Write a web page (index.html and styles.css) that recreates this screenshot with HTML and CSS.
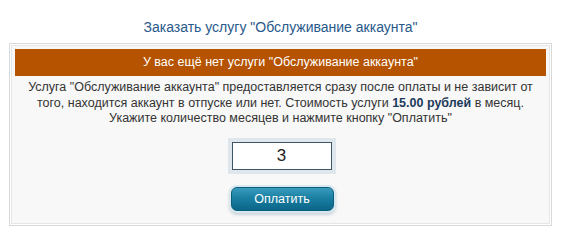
FILE: index.html
```html
<!DOCTYPE html>
<html lang="ru">
<head>
<meta charset="utf-8">
<link rel="stylesheet" href="styles.css">
</head>
<body>
<div class="page">
  <h1 class="title">Заказать услугу "Обслуживание аккаунта"</h1>
  <div class="box">
    <div class="notice">У вас ещё нет услуги "Обслуживание аккаунта"</div>
    <p class="desc">Услуга "Обслуживание аккаунта" предоставляется сразу после оплаты и не зависит от<br>того, находится аккаунт в отпуске или нет. Стоимость услуги <b class="price">15.00 рублей</b> в месяц.<br>Укажите количество месяцев и нажмите кнопку "Оплатить"</p>
    <div class="field"><input class="months" type="text" value="3"></div>
    <div class="actions"><button class="pay" type="button">Оплатить</button></div>
  </div>
</div>
</body>
</html>
```
FILE: styles.css
```css
html, body {
  margin: 0;
  padding: 0;
  background: #ffffff;
}
.page {
  width: 561px;
  font-family: "Liberation Sans", Arial, sans-serif;
}
.title {
  margin: 0;
  height: 43px;
  box-sizing: border-box;
  padding-top: 17px;
  font-size: 14px;
  font-weight: normal;
  line-height: 20px;
  color: #28598a;
  text-align: center;
}
.box {
  margin: 0 9px 0 9px;
  border: 1px solid #d9d9d9;
  box-shadow: inset 0 0 0 1px #ffffff, inset 0 0 0 2px #e6e6e6;
  background: #f8f8f8;
  padding: 5px 5px 14px;
}
.notice {
  background: #b55300;
  color: #ffffff;
  text-align: center;
  font-size: 12.5px;
  height: 27px;
  line-height: 27px;
}
.desc {
  margin: 4px 0 0;
  text-align: center;
  font-size: 12.5px;
  line-height: 15.5px;
  color: #333333;
}
.price {
  color: #1d3b5c;
}
.field {
  display: flex;
  justify-content: center;
  margin-top: 15px;
}
.months {
  width: 100px;
  height: 28px;
  box-sizing: border-box;
  border: 1px solid #3f5666;
  box-shadow: 0 0 0 4px #dfe6ec;
  background: #ffffff;
  text-align: center;
  font-family: "Liberation Sans", Arial, sans-serif;
  font-size: 17px;
  color: #222;
  padding: 0;
  margin-left: 2px;
}
.actions {
  display: flex;
  justify-content: center;
  margin-top: 17px;
}
.pay {
  width: 103px;
  height: 24px;
  border: 1px solid #0c5d7c;
  border-radius: 6px;
  background: linear-gradient(#3a9cbd, #1a7fa3 45%, #0b6688);
  box-shadow: 0 0 0 2px #d7e8ef, 0 2px 3px 2px rgba(120,150,170,0.35);
  color: #ffffff;
  font-family: "Liberation Sans", Arial, sans-serif;
  font-size: 12.5px;
  padding: 0;
  margin-left: 3px;
}
```
